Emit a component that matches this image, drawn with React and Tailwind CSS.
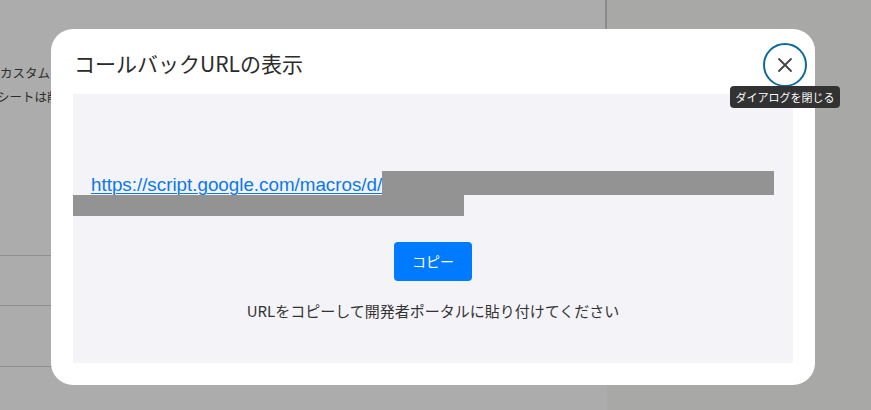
export default function App() {
  const jp = { fontFamily: '"Noto Sans CJK JP", "Noto Sans", sans-serif' };
  return (
    <div className="relative w-[871px] h-[410px] overflow-hidden flex bg-[#acacac]" style={jp}>
      {/* background page */}
      <div className="w-[605px] h-full flex flex-col text-[12.5px] text-[#2e2e2e]">
        <div className="h-[62px]" />
        <div className="h-[22px] leading-[22px] whitespace-nowrap">カスタムメールアドレス</div>
        <div className="h-[26px] leading-[26px] whitespace-nowrap -ml-[3px]">シートは削除されます</div>
        <div className="h-[145px]" />
        <div className="border-t border-[#8f8f8f] h-[50px]" />
        <div className="border-t border-[#8f8f8f] h-[61px]" />
        <div className="border-t border-[#8f8f8f]" />
      </div>
      <div className="w-[2px] h-[40px] bg-[#8b8b8b]" />
      <div className="flex-1 h-full bg-[#a8a9a7]" />

      {/* modal */}
      <div className="absolute left-[51px] top-[29px] w-[764px] h-[356px] bg-white rounded-[22px] px-[22px] pb-[22px] flex flex-col">
        <div className="h-[65px] flex items-center pt-[4px]">
          <h2 className="text-[21px] text-[#2b2b2b] leading-none pl-[1px]">コールバックURLの表示</h2>
        </div>
        <div className="flex-1 bg-[#f3f3f8] flex flex-col">
          <div className="h-[77px]" />
          <div className="flex items-end pl-[18px] h-[24px]">
            <a
              href="#"
              className="text-[18.8px] leading-[20px] text-[#0a78f0] underline underline-offset-[2px] decoration-1"
              style={{ fontFamily: '"Liberation Sans", Arial, sans-serif' }}
            >
              https://script.google.com/macros/d/
            </a>
            <span className="w-[392px] h-[24px] bg-[#939393]" />
          </div>
          <div className="w-[391px] h-[21px] bg-[#939393]" />
          <div className="flex justify-center mt-[26px]">
            <button className="w-[78px] h-[39px] rounded-[4px] bg-[#007aff] text-white text-[14px] flex items-center justify-center">
              コピー
            </button>
          </div>
          <p className="text-center text-[15px] text-[#333] mt-[19px] leading-[22px]">
            URLをコピーして開発者ポータルに貼り付けてください
          </p>
        </div>

        {/* close button */}
        <button className="absolute left-[712px] top-[14px] w-[44px] h-[44px] rounded-full border-[2.5px] border-[#0b6a9c] bg-white flex items-center justify-center">
          <svg width="16" height="16" viewBox="0 0 16 16" fill="none" stroke="#444" strokeWidth="1.8" strokeLinecap="round">
            <path d="M2 2 L14 14 M14 2 L2 14" />
          </svg>
        </button>
        {/* tooltip */}
        <div className="absolute left-[679px] top-[57px] w-[110px] h-[22px] rounded-[4px] bg-[#323232] text-white text-[11px] flex items-center justify-center whitespace-nowrap">
          ダイアログを閉じる
        </div>
      </div>
    </div>
  );
}
